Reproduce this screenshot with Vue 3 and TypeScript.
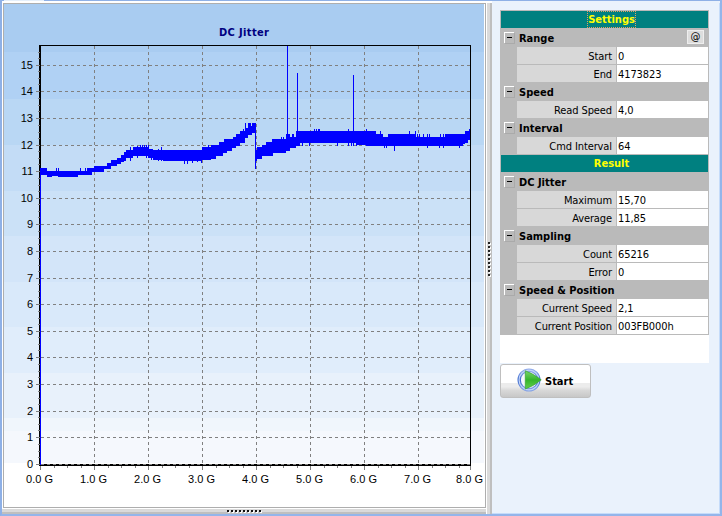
<script setup lang="ts">
interface Row { kind: 'title' | 'group' | 'item'; label: string; value?: string; button?: boolean; focus?: boolean }

const rows: Row[] = [
  { kind: 'title', label: 'Settings', focus: true },
  { kind: 'group', label: 'Range', button: true },
  { kind: 'item', label: 'Start', value: '0' },
  { kind: 'item', label: 'End', value: '4173823' },
  { kind: 'group', label: 'Speed' },
  { kind: 'item', label: 'Read Speed', value: '4,0' },
  { kind: 'group', label: 'Interval' },
  { kind: 'item', label: 'Cmd Interval', value: '64' },
  { kind: 'title', label: 'Result' },
  { kind: 'group', label: 'DC Jitter' },
  { kind: 'item', label: 'Maximum', value: '15,70' },
  { kind: 'item', label: 'Average', value: '11,85' },
  { kind: 'group', label: 'Sampling' },
  { kind: 'item', label: 'Count', value: '65216' },
  { kind: 'item', label: 'Error', value: '0' },
  { kind: 'group', label: 'Speed & Position' },
  { kind: 'item', label: 'Current Speed', value: '2,1' },
  { kind: 'item', label: 'Current Position', value: '003FB000h' },
]

const bands = [
  [4, 48, '#a9ccf1'], [52, 47, '#b0d1f4'], [99, 46, '#b9d7f4'], [145, 46, '#c3dcf6'],
  [191, 45, '#cbe1f7'], [236, 46, '#d3e5f9'], [282, 45, '#d9e9fa'], [327, 46, '#e0edfb'],
  [373, 45, '#e8f1fb'], [418, 13, '#f0f6fc'], [431, 32, '#f5f8fd'], [463, 43, '#ffffff'],
] as [number, number, string][]

const yTicks = Array.from({ length: 16 }, (_, n) => ({ n, y: Math.floor(464.3 - n * 26.6) }))
const xTicks = [40, 94, 148, 202, 256, 310, 364, 418, 470].map((x, n) => ({ n, x }))
const yMinor = yTicks.flatMap(t => [1, 2, 3].map(k => Math.round(t.y - k * 6.65))).filter(y => y > 46)
const xMinor = xTicks.slice(0, -1).flatMap(t => [1, 2, 3].map(k => Math.round(t.x + k * 13.5))).filter(x => x < 470)

// Column ranges of the trace: first x, top, bottom.
const trace: number[][] = [
  [40, 168, 175], [47, 171, 177], [52, 171, 176], [58, 171, 177], [78, 171, 175], [87, 168, 175], [92, 168, 172],
  [94, 166, 172], [104, 166, 169], [107, 163, 169], [111, 160, 166], [117, 158, 164], [121, 155, 162],
  [124, 152, 161], [126, 150, 158], [133, 147, 156], [149, 149, 158], [153, 150, 160], [163, 150, 161],
  [202, 147, 160], [211, 145, 159], [216, 145, 156], [219, 142, 156], [223, 142, 153], [224, 139, 153],
  [227, 139, 151], [232, 139, 148], [233, 137, 148], [236, 134, 146], [240, 131, 143], [245, 128, 138],
  [248, 126, 135], [252, 123, 133], [255, 123, 169], [256, 150, 161], [257, 147, 159], [262, 145, 156],
  [266, 142, 156], [273, 139, 153], [286, 134, 151], [290, 137, 148], [296, 131, 146], [300, 131, 143],
  [347, 131, 143], [356, 131, 145], [366, 131, 146], [376, 134, 146], [383, 137, 146], [388, 134, 146],
  [416, 137, 146], [445, 134, 146], [463, 134, 144], [465, 131, 143], [468, 131, 140], [470, 131, 140],
]
const peaks: number[][] = [
  [56, 168, 176], [58, 168, 176], [80, 168, 175], [85, 168, 175], [130, 147, 161], [137, 146, 158],
  [140, 145, 156], [142, 145, 156], [144, 145, 156], [146, 145, 158], [148, 145, 158], [151, 149, 160],
  [158, 149, 161], [161, 147, 161], [184, 150, 164], [187, 150, 164], [192, 150, 163], [197, 150, 162],
  [201, 150, 163], [208, 145, 160], [243, 129, 142], [245, 123, 138], [248, 123, 135], [249, 123, 135],
  [250, 123, 134], [260, 147, 159], [268, 142, 156], [270, 142, 156], [272, 139, 156], [281, 137, 153],
  [283, 137, 153], [287, 46, 151], [288, 134, 151], [292, 134, 148], [293, 134, 148], [297, 73, 145],
  [302, 131, 146], [309, 131, 146], [314, 129, 143], [316, 129, 143], [318, 129, 143], [319, 129, 143],
  [337, 131, 146], [348, 129, 146], [351, 131, 146], [353, 75, 146], [356, 131, 146], [366, 129, 146],
  [370, 131, 146], [373, 131, 146], [380, 131, 146], [384, 137, 148], [386, 137, 148], [394, 134, 151],
  [409, 131, 146], [415, 131, 146], [417, 134, 146], [419, 134, 146], [423, 134, 146], [427, 134, 148],
  [429, 134, 146], [439, 137, 148], [440, 134, 146], [443, 134, 148], [459, 134, 148], [469, 129, 140],
]
const segments = trace.slice(0, -1).map((s, i) => ({ x: s[0], y: s[1], w: trace[i + 1][0] - s[0], h: s[2] - s[1] }))
</script>

<template>
  <div class="window">
    <div class="tabline"><span class="tab"></span></div>
    <div class="left">
      <svg class="chart" viewBox="4 4 481 503" shape-rendering="crispEdges">
        <rect v-for="b in bands" :key="b[0]" x="4" :y="b[0]" width="480" :height="b[1]" :fill="b[2]" />
        <rect x="40" y="45" width="430" height="1" fill="#000" />
        <rect x="470" y="45" width="1" height="421" fill="#000" />
        <rect x="39" y="45" width="2" height="421" fill="#000" />
        <rect x="39" y="464" width="432" height="2" fill="#000" />
        <g stroke="#808080" stroke-width="1">
          <g stroke-dasharray="3 3">
            <path v-for="t in yTicks" :key="t.n" :d="`M41 ${t.y + .5}H470`" />
            <path v-for="t in xTicks.slice(1, -1)" :key="t.n" :d="`M${t.x + .5} 46V464`" />
          </g>
          <path v-for="t in yTicks" :key="t.n" :d="`M36 ${t.y + .5}H40`" />
          <path v-for="t in xTicks" :key="t.n" :d="`M${t.x + .5} 466V470`" />
          <path v-for="y in yMinor" :key="y" :d="`M38 ${y + .5}H40`" />
          <path v-for="x in xMinor" :key="x" :d="`M${x + .5} 466V468`" />
        </g>
        <g fill="#0000ff">
          <rect x="40" y="168" width="1" height="297" />
          <rect v-for="s in segments" :key="s.x" :x="s.x" :y="s.y" :width="s.w" :height="s.h" />
          <rect v-for="(p, i) in peaks" :key="i" :x="p[0]" :y="p[1]" width="1" :height="p[2] - p[1]" />
        </g>
        <g class="ticks">
          <text v-for="t in yTicks" :key="t.n" x="33" :y="t.y + 4" text-anchor="end">{{ t.n }}</text>
          <text v-for="t in xTicks" :key="t.n" :x="t.x - 14" y="483" textLength="27">{{ t.n }}.0 G</text>
        </g>
        <text class="heading" x="219" y="36" textLength="50">DC Jitter</text>
      </svg>
      <div class="hsplit"><i v-for="n in 9" :key="n"></i></div>
    </div>
    <div class="vsplit"><i v-for="n in 9" :key="n"></i></div>
    <div class="side">
      <div class="sheet">
        <div v-for="(r, i) in rows" :key="i" class="row" :class="r.kind">
          <span v-if="r.kind === 'title'" :class="{ focus: r.focus }">{{ r.label }}</span>
          <template v-else-if="r.kind === 'group'">
            <i class="toggle"></i><b>{{ r.label }}</b><span v-if="r.button" class="at">@</span>
          </template>
          <template v-else>
            <i class="indent"></i><span class="label">{{ r.label }}</span><span class="value">{{ r.value }}</span>
          </template>
        </div>
        <div class="end"></div>
      </div>
      <button class="start" type="button">
        <svg width="25" height="24" viewBox="0 0 25 24">
          <defs>
            <linearGradient id="ring" x1="0" y1="0" x2="0" y2="1">
              <stop offset="0" stop-color="#92acea" /><stop offset=".5" stop-color="#3f6ccd" /><stop offset="1" stop-color="#86a3e4" />
            </linearGradient>
            <linearGradient id="play" x1="0" y1="0" x2="0" y2="1">
              <stop offset="0" stop-color="#7bd66c" /><stop offset=".5" stop-color="#35b52b" /><stop offset="1" stop-color="#62cf4c" />
            </linearGradient>
          </defs>
          <circle cx="12" cy="12" r="9.8" fill="#f5f7fc" stroke="url(#ring)" stroke-width="3.4" />
          <circle cx="12" cy="12" r="9.9" fill="none" stroke="#c3d5f8" stroke-width="1.2" />
          <path d="M8.3 2.8Q16 5.5 24.2 11.8Q16 18.5 8.3 21Z" fill="url(#play)" stroke="#3da63a" stroke-width=".8" />
        </svg>
        <span>Start</span>
      </button>
    </div>
  </div>
</template>

<style>
body { overflow: hidden; }
</style>

<style scoped>
.window {
  box-sizing: border-box; width: 722px; height: 516px; background: #eaf2fc;
  display: grid; grid-template: 3px 511px / 484px 6px 1fr;
  border-left: 2px solid #8eb0e6; border-right: 2px solid #94b5ea; border-bottom: 2px solid #94b5ea;
  box-shadow: inset -1px -1px #c5dcfa;
  font-family: "DejaVu Sans Condensed", "DejaVu Sans", sans-serif; font-size: 11px; color: #000;
}
.tabline { grid-column: 1 / -1; background: linear-gradient(90deg, #fff 490px, #eaf2fc 490px); border-top: 1px solid #8eb0e6; box-sizing: border-box; display: flex; padding-left: 2px; }
.tab { width: 40px; height: 1px; margin-top: -1px; background: #e4effb; }
.left { display: flex; flex-direction: column; background: #fff; }
.chart { display: block; box-sizing: border-box; width: 483px; height: 505px; margin-left: 1px; border: 1px solid #aeaeae; }
.ticks text { font: 11px "Liberation Sans", sans-serif; }
.heading { font: bold 11px "DejaVu Sans Condensed", "DejaVu Sans", sans-serif; fill: #000080; }
.hsplit { height: 6px; display: flex; justify-content: center; gap: 2px; padding-top: 2px; box-sizing: border-box; background: linear-gradient(#fff 1px, #dadada 1px 4px, #bfbfbf 4px); }
.hsplit i { width: 2px; height: 2px; background: #111; box-shadow: 1px 1px #fff; }
.vsplit { box-sizing: border-box; display: flex; flex-direction: column; align-items: center; justify-content: center; gap: 2px; background: linear-gradient(90deg, #fff 1px, #dadada 1px 4px, #bfbfbf 4px); }
.vsplit i { width: 2px; height: 2px; background: #222; box-shadow: 1px 1px #fff; }
.side { padding: 7px 0 0 8px; }
.sheet { width: 209px; height: 353px; background: #fff; }
.row { box-sizing: border-box; width: 209px; height: 18px; display: flex; border: 1px solid #bababa; border-bottom: 0; background: #bababa; line-height: 18px; white-space: nowrap; }
.title { background: #008080; color: #ff0; font-weight: bold; justify-content: center; padding-left: 14px; }
.end { height: 1px; background: #bababa; }
.focus { height: 15px; margin-top: 1px; line-height: 16px; outline: 1px dotted #e6a060; }
.group b { width: 170px; line-height: 19px; }
.toggle { position: relative; box-sizing: border-box; width: 10px; height: 11px; margin: 3px 5px 0 3px; border: solid #fff; border-width: 1px 0 0 1px; box-shadow: 1px 1px #aaa; }
.toggle::after { content: ""; position: absolute; left: 2px; top: 4px; width: 5px; height: 1px; background: #000; }
.at { box-sizing: border-box; width: 17px; height: 14px; margin: 1px 0 0 -2px; background: #ddd; border: 1px solid #eee; line-height: 12px; text-align: center; }
.indent { width: 16px; }
.label { box-sizing: border-box; width: 100px; padding-right: 4px; background: #d8d8d8; text-align: right; letter-spacing: -.1px; border-right: 1px solid #bababa; line-height: 19px; height: 17px; }
.value { flex: 1; height: 17px; line-height: 19px; padding-left: 1px; background: #fff; letter-spacing: -.1px; }
.start { box-sizing: border-box; width: 91px; height: 34px; margin-top: 1px; padding: 0 0 0 16px; display: flex; align-items: center; gap: 3px; border: 1px solid #bfbfbf; border-radius: 3px; background: linear-gradient(#fff 55%, #ececec 55% 68%, #d7d7d7 80%, #c7c7c7); font: bold 11px "DejaVu Sans Condensed", "DejaVu Sans", sans-serif; color: #000; }
.start svg { margin-top: -2px; }
</style>
